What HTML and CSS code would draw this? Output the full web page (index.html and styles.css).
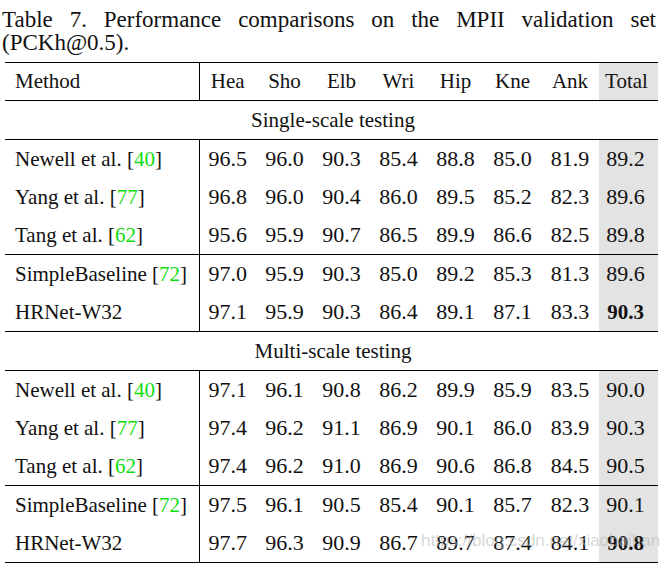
FILE: index.html
```html
<!DOCTYPE html>
<html>
<head>
<meta charset="utf-8">
<link rel="stylesheet" href="styles.css">
</head>
<body>
<div class="page">
  <p class="caption">Table 7. Performance comparisons on the MPII validation set (PCKh@0.5).</p>
  <table class="results">
    <colgroup>
      <col class="c-method"><col class="c-num"><col class="c-num"><col class="c-num"><col class="c-num"><col class="c-num"><col class="c-num"><col class="c-num7"><col class="c-total">
    </colgroup>
    <thead>
      <tr class="head">
        <th class="method">Method</th><th>Hea</th><th>Sho</th><th>Elb</th><th>Wri</th><th>Hip</th><th>Kne</th><th>Ank</th><th class="total">Total</th>
      </tr>
    </thead>
    <tbody>
      <tr class="section"><td colspan="9">Single-scale testing</td></tr>
      <tr class="first"><td class="method">Newell et al. [<span class="ref">40</span>]</td><td>96.5</td><td>96.0</td><td>90.3</td><td>85.4</td><td>88.8</td><td>85.0</td><td>81.9</td><td class="total">89.2</td></tr>
      <tr><td class="method">Yang et al. [<span class="ref">77</span>]</td><td>96.8</td><td>96.0</td><td>90.4</td><td>86.0</td><td>89.5</td><td>85.2</td><td>82.3</td><td class="total">89.6</td></tr>
      <tr><td class="method">Tang et al. [<span class="ref">62</span>]</td><td>95.6</td><td>95.9</td><td>90.7</td><td>86.5</td><td>89.9</td><td>86.6</td><td>82.5</td><td class="total">89.8</td></tr>
      <tr class="first"><td class="method">SimpleBaseline [<span class="ref">72</span>]</td><td>97.0</td><td>95.9</td><td>90.3</td><td>85.0</td><td>89.2</td><td>85.3</td><td>81.3</td><td class="total">89.6</td></tr>
      <tr class="last"><td class="method">HRNet-W32</td><td>97.1</td><td>95.9</td><td>90.3</td><td>86.4</td><td>89.1</td><td>87.1</td><td>83.3</td><td class="total best">90.3</td></tr>
      <tr class="section"><td colspan="9">Multi-scale testing</td></tr>
      <tr class="first"><td class="method">Newell et al. [<span class="ref">40</span>]</td><td>97.1</td><td>96.1</td><td>90.8</td><td>86.2</td><td>89.9</td><td>85.9</td><td>83.5</td><td class="total">90.0</td></tr>
      <tr><td class="method">Yang et al. [<span class="ref">77</span>]</td><td>97.4</td><td>96.2</td><td>91.1</td><td>86.9</td><td>90.1</td><td>86.0</td><td>83.9</td><td class="total">90.3</td></tr>
      <tr><td class="method">Tang et al. [<span class="ref">62</span>]</td><td>97.4</td><td>96.2</td><td>91.0</td><td>86.9</td><td>90.6</td><td>86.8</td><td>84.5</td><td class="total">90.5</td></tr>
      <tr class="first"><td class="method">SimpleBaseline [<span class="ref">72</span>]</td><td>97.5</td><td>96.1</td><td>90.5</td><td>85.4</td><td>90.1</td><td>85.7</td><td>82.3</td><td class="total">90.1</td></tr>
      <tr class="last"><td class="method">HRNet-W32</td><td>97.7</td><td>96.3</td><td>90.9</td><td>86.7</td><td>89.7</td><td>87.4</td><td>84.1</td><td class="total best">90.8</td></tr>
    </tbody>
  </table>
  <div class="watermark">https://blog.csdn.net/xiaobaihan</div>
</div>
</body>
</html>
```
FILE: styles.css
```css
html, body {
  margin: 0;
  padding: 0;
  background: #ffffff;
}

.page {
  position: relative;
  width: 667px;
  height: 566px;
  padding-top: 8px;
  box-sizing: border-box;
  color: #111111;
  font-family: "Liberation Serif", "Times New Roman", serif;
}

.caption {
  margin: 0 11px 0 2px;
  font-size: 23px;
  line-height: 23px;
  text-align: justify;
  text-align-last: left;
}

.results {
  margin: 8px 0 0 5px;
  width: 653px;
  table-layout: fixed;
  border-collapse: collapse;
  border-top: 1px solid #000;
  border-bottom: 1px solid #000;
}

.c-method { width: 194px; }
.c-num { width: 57px; }
.c-num7 { width: 58px; }
.c-total { width: 59px; }

.results th,
.results td {
  height: 38px;
  padding: 0;
  text-align: center;
  vertical-align: middle;
  font-size: 22px;
  font-weight: normal;
  white-space: nowrap;
}

.results .head th {
  height: 37px;
  font-size: 21px;
  border-bottom: 1px solid #000;
}

.results .method {
  text-align: left;
  padding-left: 10px;
  font-size: 21px;
  border-right: 1px solid #000;
}

.results .total {
  background: #e3e3e3;
  padding-left: 0;
  padding-right: 6px;
}

.results .head .total {
  padding-right: 4px;
}

.results .best {
  font-weight: bold;
  font-size: 21px;
}

.results .section td {
  font-size: 21px;
  background: #ffffff;
  border-bottom: 1px solid #000;
  padding-left: 3px;
}

.results tr.last td {
  border-bottom: 1px solid #000;
}

.results tr.first ~ tr.first td {
  border-top: 1px solid #000;
}

.ref {
  color: #10dd10;
}

.watermark {
  position: absolute;
  left: 421px;
  top: 531px;
  font-family: "Liberation Sans", Arial, sans-serif;
  font-size: 17px;
  color: rgba(180, 180, 180, 0.55);
  white-space: nowrap;
}
```
